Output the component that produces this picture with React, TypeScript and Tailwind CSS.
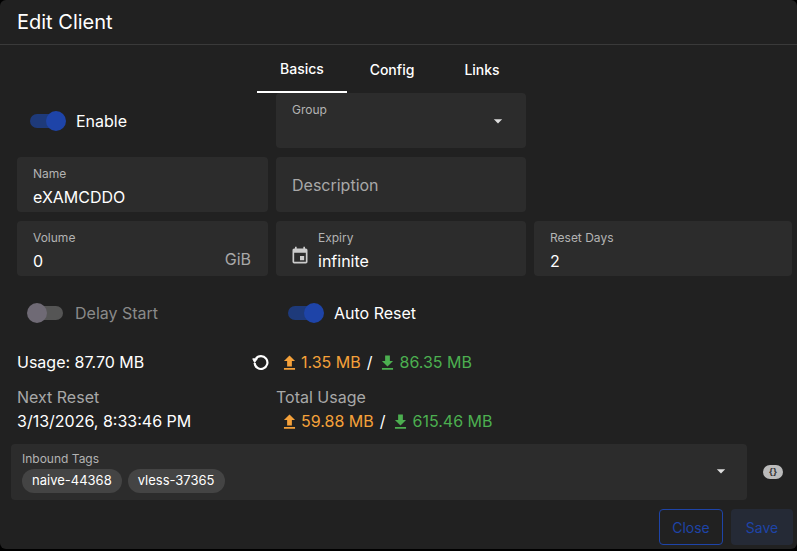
import React from 'react';

const Field = ({ label, value, className = '', children }: { label?: string; value?: string; className?: string; children?: React.ReactNode }) => (
  <div className={`bg-[#2c2c2c] rounded-[4px] h-[55px] px-4 pt-[10px] flex flex-col ${className}`}>
    {label && <span className="text-[12px] leading-[14px] text-[#b3b3b3]">{label}</span>}
    {value !== undefined && <span className="text-[16px] leading-[24px] mt-[4px] text-white">{value}</span>}
    {children}
  </div>
);

const Switch = ({ on }: { on: boolean }) => (
  <div className="relative w-[38px] h-[20px] flex items-center">
    <div className={`w-[34px] h-[14px] rounded-full ml-[2px] ${on ? 'bg-[#1e3a7a]' : 'bg-[#555]'}`} />
    <div className={`absolute top-0 w-[20px] h-[20px] rounded-full ${on ? 'right-0 bg-[#1e44a8]' : 'left-0 bg-[#6f6a75]'}`} />
  </div>
);

const Up = () => (
  <svg width="19" height="19" viewBox="0 0 24 24" fill="currentColor"><path d="M5 21h14v-2H5v2zM12 3l-7 7h4v7h6v-7h4z" /></svg>
);
const Down = () => (
  <svg width="19" height="19" viewBox="0 0 24 24" fill="currentColor"><path d="M5 21h14v-2H5v2zM19 10h-4V3H9v7H5l7 7z" /></svg>
);
const Caret = () => (
  <svg width="20" height="20" viewBox="0 0 24 24" fill="#ddd"><path d="M7 10l5 5 5-5z" /></svg>
);

export default function App() {
  return (
    <div className="w-[797px] h-[551px] bg-black text-white" style={{ fontFamily: 'Inter, Roboto, sans-serif' }}>
      <div className="h-[549px] bg-[#212121] rounded-[6px] flex flex-col overflow-hidden">
        <div className="h-[45px] border-b border-[#3a3a3a] px-[17px] flex items-center text-[20px]">Edit Client</div>
        <div className="flex pl-[257px] h-[48px]">
          {['Basics', 'Config', 'Links'].map((t, i) => (
            <div key={t} className={`w-[90px] flex items-center justify-center text-[14px] font-medium ${i === 0 ? 'border-b-2 border-white' : ''}`}>{t}</div>
          ))}
        </div>
        <div className="px-[17px] grid grid-cols-[251px_250px_258px] gap-x-[8px] gap-y-[9px]">
          <div className="flex items-center gap-[10px] pl-[11px] h-[55px]">
            <Switch on />
            <span className="text-[16px]">Enable</span>
          </div>
          <Field label="Group" className="relative">
            <div className="absolute right-[18px] top-[18px]"><Caret /></div>
          </Field>
          <div />
          <Field label="Name" value="eXAMCDDO" />
          <div className="bg-[#2c2c2c] rounded-[4px] h-[55px] px-4 flex items-center text-[16px] text-[#a8a8a8]">Description</div>
          <div />
          <Field label="Volume" className="relative">
            <span className="text-[16px] leading-[24px] mt-[4px]">0</span>
            <span className="absolute right-[17px] top-[26px] text-[16px] text-[#a8a8a8]">GiB</span>
          </Field>
          <div className="bg-[#2c2c2c] rounded-[4px] h-[55px] pl-[14px] pt-[10px] flex items-start gap-[8px]">
            <svg className="mt-[15px]" width="20" height="20" viewBox="0 0 24 24" fill="#ccc"><path d="M17 12h-5v5h5v-5zM16 1v2H8V1H6v2H5c-1.11 0-1.99.9-1.99 2L3 19a2 2 0 0 0 2 2h14c1.1 0 2-.9 2-2V5c0-1.1-.9-2-2-2h-1V1h-2zm3 18H5V8h14v11z" /></svg>
            <div className="flex flex-col">
              <span className="text-[12px] leading-[14px] text-[#b3b3b3]">Expiry</span>
              <span className="text-[16px] leading-[24px] mt-[4px]">infinite</span>
            </div>
          </div>
          <Field label="Reset Days" value="2" />
        </div>
        <div className="px-[17px] grid grid-cols-[259px_1fr] mt-[17px]">
          <div className="flex items-center gap-[10px] pl-[10px] h-[40px]">
            <Switch on={false} />
            <span className="text-[16px] text-[#8a8a8a]">Delay Start</span>
          </div>
          <div className="flex items-center gap-[10px] pl-[10px] h-[40px]">
            <Switch on />
            <span className="text-[16px]">Auto Reset</span>
          </div>
          <div className="flex items-center justify-between h-[24px] mt-[17px] pr-[4px] text-[16px]">
            <span>Usage: 87.70 MB</span>
            <svg width="22" height="22" viewBox="0 0 24 24" fill="none" stroke="white" strokeWidth="2.4"><path d="M6.3 8.5A7 7 0 1 1 5 13" /><path d="M3 8.5h5l-3 4z" fill="white" strokeWidth="1" /></svg>
          </div>
          <div className="flex items-center gap-[6px] h-[24px] mt-[17px] pl-[4px] text-[16px]">
            <span className="flex items-center gap-[2px] text-[#f5a13a]"><Up />1.35 MB</span>
            <span>/</span>
            <span className="flex items-center gap-[2px] text-[#4caf50]"><Down />86.35 MB</span>
          </div>
          <div className="flex flex-col mt-[11px] text-[16px] leading-[24px]">
            <span className="text-[#a8a8a8]">Next Reset</span>
            <span>3/13/2026, 8:33:46 PM</span>
          </div>
          <div className="flex flex-col mt-[11px] text-[16px] leading-[24px]">
            <span className="text-[#a8a8a8]">Total Usage</span>
            <div className="flex items-center gap-[6px] pl-[4px]">
              <span className="flex items-center gap-[2px] text-[#f5a13a]"><Up />59.88 MB</span>
              <span>/</span>
              <span className="flex items-center gap-[2px] text-[#4caf50]"><Down />615.46 MB</span>
            </div>
          </div>
        </div>
        <div className="pl-[11px] pr-[12px] flex items-center gap-[16px] mt-[11px]">
          <div className="flex-1 bg-[#2c2c2c] rounded-[4px] h-[56px] pt-[8px] relative">
            <div className="text-[12px] leading-[14px] text-[#b3b3b3] pl-[11px]">Inbound Tags</div>
            <div className="flex gap-[6px] mt-[3px] pl-[11px]">
              <span className="bg-[#444] rounded-full px-[10px] h-[24px] flex items-center text-[13px]">naive-44368</span>
              <span className="bg-[#444] rounded-full px-[10px] h-[24px] flex items-center text-[13px]">vless-37365</span>
            </div>
            <div className="absolute right-[16px] top-[17px]"><Caret /></div>
          </div>
          <div className="w-[20px] h-[14px] rounded-full bg-[#bbb] text-[#333] text-[9px] font-bold flex items-center justify-center mr-[2px]">{'{}'}</div>
        </div>
        <div className="flex justify-end gap-[8px] pr-[4px] mt-[9px]">
          <div className="w-[64px] h-[36px] border border-[#1e44a8] rounded-[4px] flex items-center justify-center text-[14px] text-[#1e44a8]">Close</div>
          <div className="w-[62px] h-[36px] bg-[#252a36] rounded-[4px] flex items-center justify-center text-[14px] text-[#1e44a8]">Save</div>
        </div>
      </div>
    </div>
  );
}
